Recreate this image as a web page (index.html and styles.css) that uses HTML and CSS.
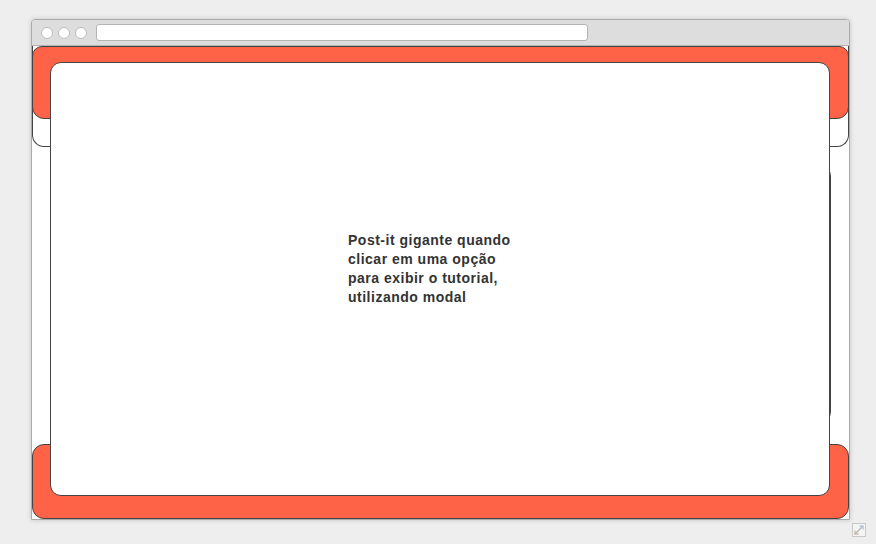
FILE: index.html
```html
<!DOCTYPE html>
<html lang="pt">
<head>
<meta charset="utf-8">
<title>Post-it modal</title>
<link rel="stylesheet" href="styles.css">
</head>
<body>
<div class="window">
  <div class="titlebar">
    <span class="dot"></span>
    <span class="dot"></span>
    <span class="dot"></span>
    <div class="urlbar"></div>
  </div>
  <div class="content">
    <div class="header">
      <div class="header-bar"></div>
    </div>
    <div class="middle">
      <div class="sidebar"></div>
    </div>
    <div class="footer"></div>
    <div class="modal">
      <p class="modal-text">Post-it gigante quando clicar em uma opção para exibir o tutorial, utilizando modal</p>
    </div>
  </div>
</div>
<div class="resize-row">
  <svg class="resize" width="14" height="14" viewBox="0 0 14 14">
    <rect x="0.5" y="0.5" width="13" height="13" fill="#f4f4f4" stroke="#c8c8c8"/>
    <path d="M3 11 L11 3" stroke="#b8b8b8" stroke-width="1.4"/>
    <path d="M7.5 3 H11 V6.5" fill="none" stroke="#b8c4d8" stroke-width="1.4"/>
    <path d="M3 7.5 V11 H6.5" fill="none" stroke="#c8b8a8" stroke-width="1.4"/>
  </svg>
</div>
</body>
</html>
```

FILE: styles.css
```css
* { box-sizing: border-box; }

body {
  margin: 0;
  background: #eeeeee;
  font-family: "Liberation Sans", Arial, sans-serif;
}

.window {
  margin: 19px 0 0 31px;
  width: 819px;
  height: 501px;
  border: 1px solid #aaaaaa;
  border-radius: 4px 4px 0 0;
  background: #ffffff;
  box-shadow: 0 0 5px rgba(0, 0, 0, 0.18);
  display: flex;
  flex-direction: column;
}

.titlebar {
  height: 26px;
  background: #dddddd;
  border-bottom: 1px solid #b4b4b4;
  border-radius: 3px 3px 0 0;
  display: flex;
  align-items: center;
  padding-left: 9px;
  gap: 5px;
  flex: none;
}

.dot {
  width: 12px;
  height: 12px;
  border-radius: 50%;
  border: 1px solid #bbbbbb;
  background: #ffffff;
}

.urlbar {
  margin-left: 4px;
  width: 492px;
  height: 17px;
  border: 1px solid #b4b4b4;
  border-radius: 3px;
  background: #ffffff;
}

.content {
  position: relative;
  flex: 1;
  display: flex;
  flex-direction: column;
  background: #ffffff;
}

.header {
  height: 101px;
  border: 1px solid #444444;
  border-top: 0;
  border-radius: 0 0 12px 12px;
  background: #ffffff;
  flex: none;
}

.header-bar {
  margin: 0 -1px;
  height: 73px;
  border: 1px solid #444444;
  border-radius: 10px 10px 12px 12px;
  background: #ff6347;
}

.middle {
  display: flex;
  justify-content: flex-end;
  padding: 19px 18px 0 0;
}

.sidebar {
  width: 220px;
  height: 256px;
  border: 1px solid #444444;
  border-radius: 10px;
  background: #ffffff;
}

.footer {
  margin-top: auto;
  height: 75px;
  border: 1px solid #444444;
  border-radius: 12px;
  background: #ff6347;
  flex: none;
}

.modal {
  position: absolute;
  left: 18px;
  top: 16px;
  width: 780px;
  height: 434px;
  border: 1px solid #444444;
  border-radius: 11px;
  background: #ffffff;
  padding: 168px 0 0 297px;
}

.modal-text {
  margin: 0;
  width: 172px;
  font-size: 14px;
  font-weight: bold;
  line-height: 19px;
  letter-spacing: 0.5px;
  color: #333333;
}

.resize-row {
  display: flex;
  justify-content: flex-end;
  padding: 3px 10px 0 0;
}

.resize { display: block; }
```
